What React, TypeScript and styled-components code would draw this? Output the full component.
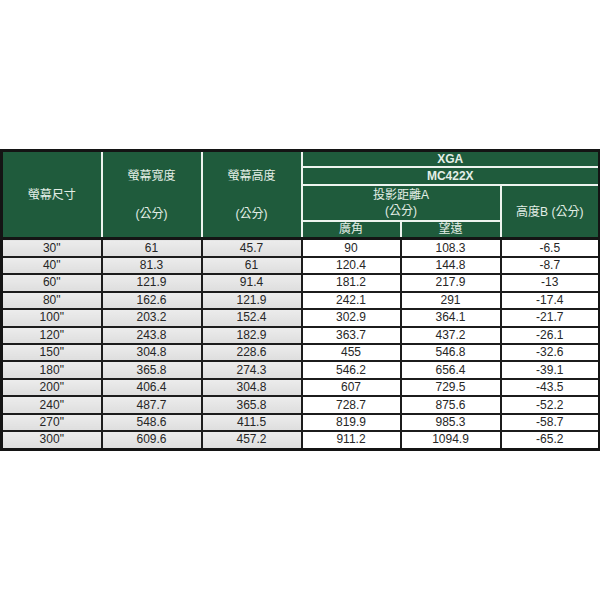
import React from 'react';
import styled, { createGlobalStyle } from 'styled-components';

const GlobalStyle = createGlobalStyle`
    html, body {
        margin: 0;
        padding: 0;
        background: #ffffff;
    }
`;

const Page = styled.div`
    min-height: 600px;
    display: flex;
    align-items: center;
    justify-content: flex-start;
    font-family: "Liberation Sans", "Noto Sans CJK TC", sans-serif;
`;

const Table = styled.table`
    width: 598px;
    border-collapse: collapse;
    table-layout: fixed;
    border: 3px solid #141414;
    font-size: 12px;
`;

const HeadCell = styled.th<{ $h?: number; $bold?: boolean }>`
    background: #1f5b3c;
    color: #e3eee6;
    font-weight: ${p => (p.$bold ? 700 : 400)};
    border: 2px solid #eef4ef;
    height: ${p => (p.$h ? `${p.$h}px` : 'auto')};
    padding: 0;
    line-height: ${p => (p.$h ? `${p.$h}px` : '16px')};
    text-align: center;
    vertical-align: middle;
`;

const StackText = styled.span<{ $gap: number }>`
    display: flex;
    flex-direction: column;
    align-items: center;
    gap: ${p => p.$gap}px;
    line-height: 16px;
`;

const DataRow = styled.tr`
    &:first-child td {
        border-top: 3px solid #141414;
    }
`;

const DataCell = styled.td<{ $tone: 'grey' | 'white' }>`
    background: ${p => (p.$tone === 'grey' ? 'linear-gradient(#ececec, #dedede)' : '#ffffff')};
    color: #262626;
    border: 2px solid #1c1c1c;
    height: 15.45px;
    padding: 0;
    line-height: 15px;
    text-align: center;
`;

const rows: string[][] = [
    ['30"', '61', '45.7', '90', '108.3', '-6.5'],
    ['40"', '81.3', '61', '120.4', '144.8', '-8.7'],
    ['60"', '121.9', '91.4', '181.2', '217.9', '-13'],
    ['80"', '162.6', '121.9', '242.1', '291', '-17.4'],
    ['100"', '203.2', '152.4', '302.9', '364.1', '-21.7'],
    ['120"', '243.8', '182.9', '363.7', '437.2', '-26.1'],
    ['150"', '304.8', '228.6', '455', '546.8', '-32.6'],
    ['180"', '365.8', '274.3', '546.2', '656.4', '-39.1'],
    ['200"', '406.4', '304.8', '607', '729.5', '-43.5'],
    ['240"', '487.7', '365.8', '728.7', '875.6', '-52.2'],
    ['270"', '548.6', '411.5', '819.9', '985.3', '-58.7'],
    ['300"', '609.6', '457.2', '911.2', '1094.9', '-65.2'],
];

const App: React.FC = () => {
    return (
        <Page>
            <GlobalStyle />
            <Table>
                <colgroup>
                    <col style={{ width: 100 }} />
                    <col style={{ width: 100 }} />
                    <col style={{ width: 100 }} />
                    <col style={{ width: 99 }} />
                    <col style={{ width: 100 }} />
                    <col style={{ width: 99 }} />
                </colgroup>
                <thead>
                    <tr>
                        <HeadCell rowSpan={4}>螢幕尺寸</HeadCell>
                        <HeadCell rowSpan={4}>
                            <StackText $gap={22}>
                                <span>螢幕寬度</span>
                                <span>(公分)</span>
                            </StackText>
                        </HeadCell>
                        <HeadCell rowSpan={4}>
                            <StackText $gap={22}>
                                <span>螢幕高度</span>
                                <span>(公分)</span>
                            </StackText>
                        </HeadCell>
                        <HeadCell colSpan={3} $h={14} $bold>XGA</HeadCell>
                    </tr>
                    <tr>
                        <HeadCell colSpan={3} $h={16} $bold>MC422X</HeadCell>
                    </tr>
                    <tr>
                        <HeadCell colSpan={2} $h={34}>
                            <StackText $gap={0}>
                                <span>投影距離A</span>
                                <span>(公分)</span>
                            </StackText>
                        </HeadCell>
                        <HeadCell rowSpan={2}>高度B (公分)</HeadCell>
                    </tr>
                    <tr>
                        <HeadCell $h={15}>廣角</HeadCell>
                        <HeadCell $h={15}>望遠</HeadCell>
                    </tr>
                </thead>
                <tbody>
                    {rows.map(r => (
                        <DataRow key={r[0]}>
                            {r.map((v, i) => (
                                <DataCell key={i} $tone={i < 3 ? 'grey' : 'white'}>{v}</DataCell>
                            ))}
                        </DataRow>
                    ))}
                </tbody>
            </Table>
        </Page>
    );
};

export default App;
